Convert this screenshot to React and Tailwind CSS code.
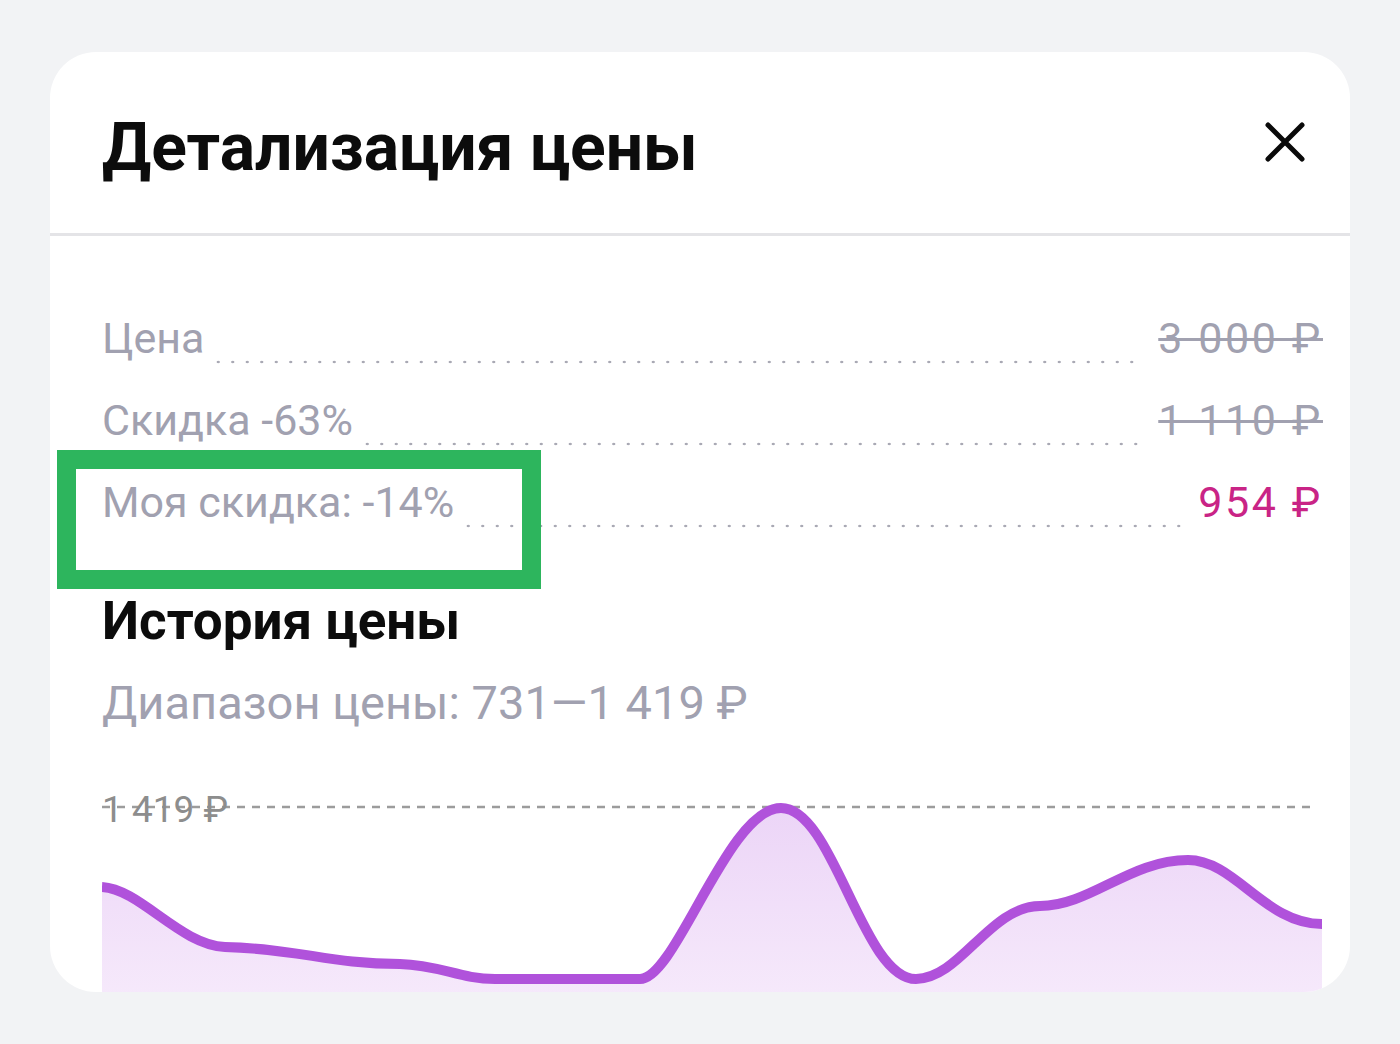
import React from "react";

const O = (x, y) => `${x - 102} ${y - 785}`;
const linePath =
  `M ${O(102, 888)} ` +
  `C ${O(140, 890)}, ${O(180, 946)}, ${O(225, 948)} ` +
  `C ${O(300, 950)}, ${O(330, 965)}, ${O(400, 965)} ` +
  `C ${O(440, 966)}, ${O(460, 980)}, ${O(495, 980)} ` +
  `L ${O(640, 980)} ` +
  `C ${O(676, 980)}, ${O(728, 809)}, ${O(781, 809)} ` +
  `C ${O(834, 809)}, ${O(862, 980)}, ${O(916, 980)} ` +
  `C ${O(960, 980)}, ${O(990, 907)}, ${O(1040, 907)} ` +
  `C ${O(1090, 907)}, ${O(1130, 861)}, ${O(1188, 861)} ` +
  `C ${O(1235, 861)}, ${O(1265, 925)}, ${O(1322, 925)}`;
const areaPath = `${linePath} L 1220 260 L 0 260 Z`;

function Row({ label, value, accent }) {
  return (
    <div className="flex items-end h-[50px]">
      <span className="text-[43px] leading-[50px] text-[#a1a1b0] whitespace-nowrap">{label}</span>
      <div className="flex-1 self-end h-[4px] mb-[-1px] ml-[7px] mr-[15px] bg-[radial-gradient(circle,_#a9a9b4_1.1px,_transparent_1.6px)] bg-[length:14.5px_4px] bg-repeat-x"></div>
      <span
        className={
          "text-[43px] leading-[50px] whitespace-nowrap tracking-[2.6px] mr-[-1px] " +
          (accent ? "text-[#c92486]" : "text-[#a1a1b0] line-through decoration-[3px] decoration-[#a1a1b0]")
        }
      >
        {value}
      </span>
    </div>
  );
}

export default function App() {
  return (
    <div className="relative w-[1400px] h-[1044px] bg-[#f2f3f5] font-['Roboto','Liberation_Sans',sans-serif] overflow-hidden">
      <div className="absolute left-[50px] top-[52px] w-[1300px] h-[940px] bg-white rounded-[46px] overflow-hidden flex flex-col">
        <div className="h-[181px] flex items-start justify-between pl-[52px] pr-[45px] pt-[57px] shrink-0">
          <h1 className="text-[66px] leading-[77px] font-bold text-[#0c0c0c]">Детализация цены</h1>
          <svg width="40" height="40" viewBox="0 0 40 40" className="mt-[13px]">
            <path d="M3 3 L37 37 M37 3 L3 37" stroke="#0a0a0a" strokeWidth="5" strokeLinecap="round" />
          </svg>
        </div>
        <div className="h-[3px] bg-[#e4e4e7] shrink-0"></div>
        <div className="pl-[52px] pr-[28px] pt-[77px] flex flex-col">
          <div className="flex flex-col gap-[32px]">
            <Row label="Цена" value="3 000 ₽" />
            <Row label="Скидка -63%" value="1 110 ₽" />
            <Row label="Моя скидка: -14%" value="954 ₽" accent />
          </div>
          <h2 className="mt-[63px] text-[53px] leading-[62px] font-bold text-[#0c0c0c]">История цены</h2>
          <p className="mt-[23px] text-[47px] leading-[55px] text-[#a1a1b0]">Диапазон цены: 731—1 419 ₽</p>
          <div className="relative mt-[54px] h-[230px] w-[1220px]">
            <svg width="1220" height="230" viewBox="0 0 1220 230" className="absolute left-0 top-0">
              <defs>
                <linearGradient id="fillg" x1="0" y1="0" x2="0" y2="1">
                  <stop offset="0" stopColor="#ecd5f7" />
                  <stop offset="1" stopColor="#f8eefc" />
                </linearGradient>
              </defs>
              <line x1="0" y1="23" x2="1213" y2="23" stroke="#9c9c9c" strokeWidth="2.5" strokeDasharray="8 7" />
              <path d={areaPath} fill="url(#fillg)" />
              <path d={linePath} fill="none" stroke="#b052db" strokeWidth="10" strokeLinejoin="round" />
            </svg>
            <span className="absolute left-0 top-[7px] text-[37px] leading-none text-[#8d8d8d]">1 419 ₽</span>
          </div>
        </div>
      </div>
      <div className="absolute left-[57px] top-[450px] w-[484px] h-[139px] border-[19px] border-[#2db55d]"></div>
    </div>
  );
}
